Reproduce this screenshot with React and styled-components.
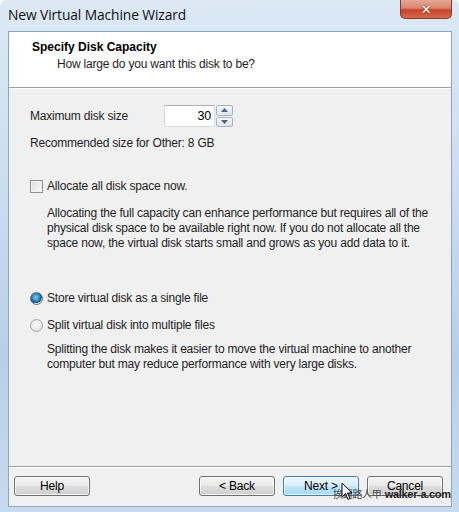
import styled, { createGlobalStyle } from 'styled-components'

const GlobalStyle = createGlobalStyle`
  html, body {
    margin: 0;
    padding: 0;
  }
  body {
    font-family: "Liberation Sans", Arial, sans-serif;
    font-size: 12px;
    letter-spacing: -0.2px;
    color: #1e1e1e;
  }
`

const Frame = styled.div`
  position: relative;
  width: 459px;
  height: 512px;
  box-sizing: border-box;
  padding: 0 7px 5px 8px;
  display: flex;
  flex-direction: column;
  background: linear-gradient(180deg, #dce9f5 0%, #c9dcef 40%, #b7cfe8 70%, #c7dbee 100%);
  border-radius: 6px 6px 0 0;
  overflow: hidden;
`

const TitleBar = styled.div`
  height: 31px;
  display: flex;
  justify-content: space-between;
  align-items: flex-start;
  flex-shrink: 0;
`

const Title = styled.div`
  padding-top: 5px;
  font-family: "Open Sans", "Noto Sans", sans-serif;
  font-size: 13.8px;
  color: #111;
  letter-spacing: -0.1px;
`

const CloseBtn = styled.div`
  width: 52px;
  height: 19px;
  box-sizing: border-box;
  border: 1px solid #8d3a2c;
  border-top: none;
  border-radius: 0 0 5px 5px;
  background: linear-gradient(180deg, #e6a898 0%, #d98571 45%, #c7442b 55%, #d5684c 100%);
  display: flex;
  align-items: center;
  justify-content: center;
  color: #fff;
  font-family: "DejaVu Sans", sans-serif;
  font-weight: bold;
  font-size: 13px;
  text-shadow: 0 0 2px #6a1a0c;
`

const Client = styled.div`
  flex: 1;
  display: flex;
  flex-direction: column;
  background: #f0f0f0;
  border: 1px solid #8fa5bd;
`

const Header = styled.div`
  height: 56px;
  flex-shrink: 0;
  background: #fff;
  border-bottom: 1px solid #a0a0a0;
  box-shadow: 0 1px 0 #fff;
  padding: 8px 0 0 23px;
  box-sizing: border-box;
`

const HeaderTitle = styled.div`
  font-weight: bold;
  line-height: 14px;
  letter-spacing: 0;
  color: #000;
`

const HeaderSub = styled.div`
  margin-top: 3px;
  padding-left: 25px;
  line-height: 15px;
`

const Body = styled.div`
  flex: 1;
  padding: 17px 0 0 21px;
  display: flex;
  flex-direction: column;
`

const SizeRow = styled.div`
  display: flex;
  align-items: flex-start;
  height: 22px;
`

const SizeLabel = styled.div`
  width: 134px;
  padding-top: 4px;
  line-height: 15px;
  height: 21px;
  overflow: hidden;
  box-sizing: border-box;
`

const Spinner = styled.div`
  display: flex;
  height: 22px;
`

const SpinInput = styled.div`
  width: 51px;
  box-sizing: border-box;
  border: 1px solid #d5dbe1;
  border-top-color: #abadb3;
  background: #fff;
  text-align: right;
  padding: 3px 3px 0 0;
  font-size: 12.5px;
  color: #000;
`

const SpinButtons = styled.div`
  width: 17px;
  margin-left: 1px;
  display: flex;
  flex-direction: column;
  gap: 1px;
`

const SpinBtn = styled.div`
  flex: 1;
  box-sizing: border-box;
  border: 1px solid #a8b3bf;
  border-radius: 2px;
  background: linear-gradient(180deg, #f6f8fa 0%, #dfe5ea 100%);
  display: flex;
  align-items: center;
  justify-content: center;
`

const Recommended = styled.div`
  margin-top: 9px;
  line-height: 15px;
`

const CheckRow = styled.label`
  display: flex;
  align-items: center;
  gap: 4px;
  margin-top: ${p => p.$top}px;
  line-height: 15px;
`

const CheckBox = styled.span`
  width: 13px;
  height: 13px;
  box-sizing: border-box;
  border: 1px solid #8e8f8f;
  background: linear-gradient(135deg, #dcdcdc 0%, #f5f5f5 80%);
  box-shadow: inset 0 0 0 1px #f4f4f4;
`

const Radio = styled.span`
  width: 13px;
  height: 13px;
  box-sizing: border-box;
  border-radius: 50%;
  border: 1px solid ${p => (p.$on ? '#5b7085' : '#a3a3a3')};
  background: ${p =>
    p.$on
      ? 'radial-gradient(circle at 45% 40%, #7fd0f6 0%, #2a7fb4 45%, #0f4d80 62%, #e9ecee 66%, #dde0e3 100%)'
      : 'radial-gradient(circle at 50% 45%, #fafafa 0%, #e6e6e6 70%, #d2d2d2 100%)'};
`

const Note = styled.p`
  margin: ${p => p.$top}px 0 0 17px;
  line-height: 15px;
  white-space: nowrap;
`

const Footer = styled.div`
  height: 40px;
  flex-shrink: 0;
  border-top: 1px solid #a0a0a0;
  box-shadow: inset 0 1px 0 #fff;
  display: flex;
  align-items: flex-start;
  padding: 9px 8px 0 5px;
  box-sizing: border-box;
`

const Button = styled.div`
  width: 76px;
  height: 20px;
  box-sizing: border-box;
  border: 1px solid ${p => (p.$hover ? '#3c7fb1' : '#707070')};
  border-radius: 3px;
  background: ${p =>
    p.$hover
      ? 'linear-gradient(180deg, #eaf6fd 0%, #d9f0fc 50%, #bee6fd 51%, #a7d9f5 100%)'
      : 'linear-gradient(180deg, #f2f2f2 0%, #ebebeb 50%, #dddddd 51%, #cfcfcf 100%)'};
  box-shadow: inset 0 0 0 1px rgba(255, 255, 255, 0.7);
  display: flex;
  align-items: center;
  justify-content: center;
  color: #000;
  margin-left: ${p => p.$gap || 0}px;
`

const Spacer = styled.div`
  flex: 1;
`

const Watermark = styled.div`
  position: absolute;
  left: 333px;
  top: 487px;
  font-size: 10px;
  line-height: 13px;
  white-space: nowrap;
  letter-spacing: -0.3px;
  color: #4a4a4a;
  font-family: "Noto Sans CJK TC", "Liberation Sans", sans-serif;
  span {
    font-family: "Liberation Sans", sans-serif;
    font-size: 11px;
    font-weight: bold;
    color: #222;
    letter-spacing: -0.3px;
  }
`

const Cursor = styled.svg`
  position: absolute;
  left: 341px;
  top: 482px;
`

const Arrow = ({ up }) => (
  <svg width="7" height="4" viewBox="0 0 7 4">
    <path d={up ? 'M0 4 L3.5 0 L7 4 Z' : 'M0 0 L3.5 4 L7 0 Z'} fill="#4d6185" />
  </svg>
)

const App = () => {
  return (
    <>
      <GlobalStyle />
      <Frame>
        <TitleBar>
          <Title>New Virtual Machine Wizard</Title>
          <CloseBtn>✕</CloseBtn>
        </TitleBar>
        <Client>
          <Header>
            <HeaderTitle>Specify Disk Capacity</HeaderTitle>
            <HeaderSub>How large do you want this disk to be?</HeaderSub>
          </Header>
          <Body>
            <SizeRow>
              <SizeLabel>
                Maximum disk size
                <br />
                (GB):
              </SizeLabel>
              <Spinner>
                <SpinInput>30</SpinInput>
                <SpinButtons>
                  <SpinBtn>
                    <Arrow up />
                  </SpinBtn>
                  <SpinBtn>
                    <Arrow />
                  </SpinBtn>
                </SpinButtons>
              </Spinner>
            </SizeRow>
            <Recommended>Recommended size for Other: 8 GB</Recommended>
            <CheckRow $top={28}>
              <CheckBox />
              Allocate all disk space now.
            </CheckRow>
            <Note $top={12}>
              Allocating the full capacity can enhance performance but requires all of the
              <br />
              physical disk space to be available right now. If you do not allocate all the
              <br />
              space now, the virtual disk starts small and grows as you add data to it.
            </Note>
            <CheckRow $top={40}>
              <Radio $on />
              Store virtual disk as a single file
            </CheckRow>
            <CheckRow $top={12}>
              <Radio />
              Split virtual disk into multiple files
            </CheckRow>
            <Note $top={9}>
              Splitting the disk makes it easier to move the virtual machine to another
              <br />
              computer but may reduce performance with very large disks.
            </Note>
          </Body>
          <Footer>
            <Button>Help</Button>
            <Spacer />
            <Button>&lt; Back</Button>
            <Button $hover $gap={8}>
              Next &gt;
            </Button>
            <Button $gap={8}>Cancel</Button>
          </Footer>
        </Client>
        <Watermark>
          挨踢路人甲-<span>walker-a.com</span>
        </Watermark>
        <Cursor width="12" height="19" viewBox="0 0 12 19">
          <path d="M1 1 L1 15 L4.5 11.5 L7 17.5 L9 16.5 L6.5 11 L11 11 Z" fill="#fff" stroke="#000" strokeWidth="1" />
        </Cursor>
      </Frame>
    </>
  )
}

export default App
